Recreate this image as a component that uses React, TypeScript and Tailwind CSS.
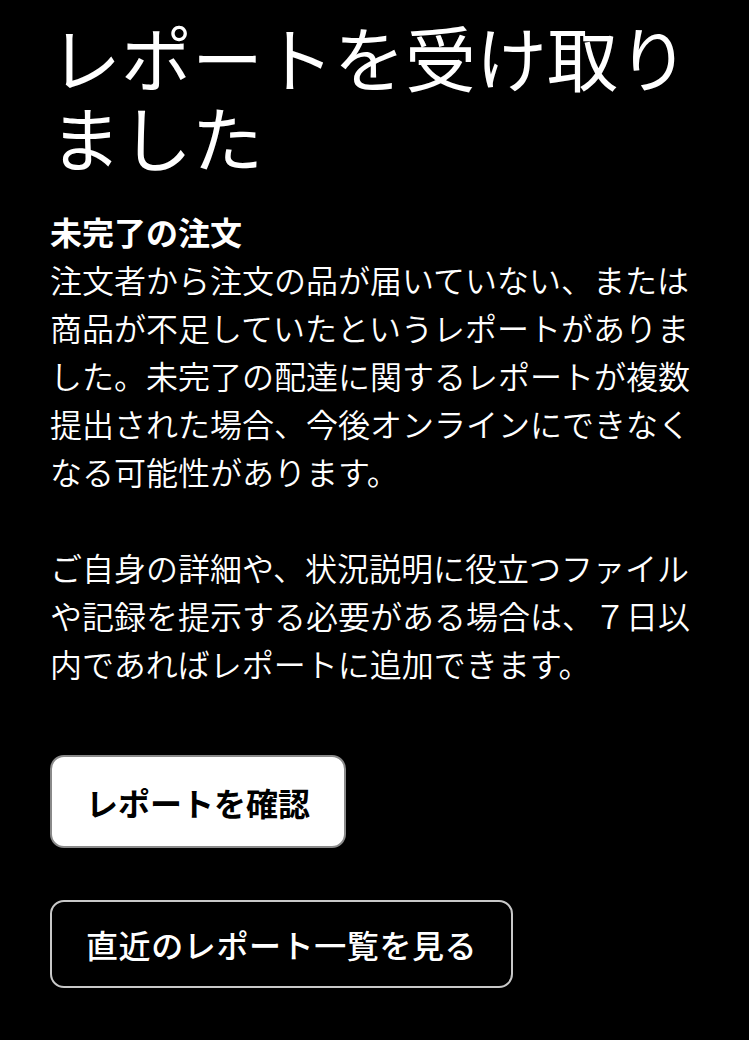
export default function App() {
  return (
    <div
      className="min-h-[1040px] w-full bg-black text-white"
      style={{ fontFamily: '"Noto Sans CJK JP", "Noto Sans", sans-serif' }}
    >
      <div className="pl-[50px] pr-[30px] pt-[15px]">
        {/* Title */}
        <h1 className="text-[71px] leading-[80px] font-normal">レポートを受け取りました</h1>

        {/* Body */}
        <div className="mt-[32px] text-[32px] leading-[48px] font-[350]">
          <p className="font-bold">未完了の注文</p>
          <p>
            注文者から注文の品が届いていない、または商品が不足していたというレポートがありました。未完了の配達に関するレポートが複数提出された場合、今後オンラインにできなくなる可能性があります。
          </p>
          <p className="mt-[48px]">
            ご自身の詳細や、状況説明に役立つファイルや記録を提示する必要がある場合は、７日以内であればレポートに追加できます。
          </p>
        </div>

        {/* Actions */}
        <div className="mt-[68px] flex flex-col items-start gap-[52px]">
          <button className="h-[93px] rounded-[14px] border-2 border-[#8a8a8a] bg-white px-[34px] text-[32px] font-bold text-black">
            レポートを確認
          </button>
          <button className="h-[88px] rounded-[14px] border-2 border-[#c8c8c8] bg-black px-[34px] text-[32px] font-medium tracking-[0.6px] text-white">
            直近のレポート一覧を見る
          </button>
        </div>
      </div>
    </div>
  );
}
